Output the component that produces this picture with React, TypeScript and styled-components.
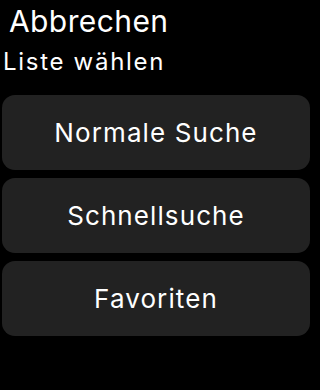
import styled, { createGlobalStyle } from 'styled-components';

const GlobalStyle = createGlobalStyle`
  html, body {
    margin: 0;
    padding: 0;
    background: #000;
  }
  body {
    font-family: Inter, "Noto Sans", sans-serif;
    color: #fff;
  }
`;

const Screen = styled.div`
  width: 312px;
  height: 390px;
  background: #000;
  display: flex;
  flex-direction: column;
  overflow: hidden;
`;

const Header = styled.header`
  display: flex;
  flex-direction: column;
  padding: 3px 0 0 0;
`;

const CancelLink = styled.div`
  font-size: 30px;
  line-height: 36px;
  letter-spacing: 0.4px;
  padding-left: 9px;
`;

const Title = styled.h1`
  margin: 8px 0 0;
  font-size: 24px;
  font-weight: 400;
  line-height: 30px;
  letter-spacing: 1.7px;
  padding-left: 3px;
`;

const List = styled.div`
  display: flex;
  flex-direction: column;
  gap: 8px;
  padding: 18px 2px 0;
`;

const Choice = styled.button`
  height: 75px;
  border: none;
  border-radius: 13px;
  background: #222222;
  color: #fff;
  font-family: Inter, "Noto Sans", sans-serif;
  font-size: 26px;
  letter-spacing: 1.1px;
  display: flex;
  align-items: center;
  justify-content: center;
  padding: 0;
`;

const options = ['Normale Suche', 'Schnellsuche', 'Favoriten'];

const App = () => (
  <>
    <GlobalStyle />
    <Screen>
      <Header>
        <CancelLink>Abbrechen</CancelLink>
        <Title>Liste wählen</Title>
      </Header>
      <List>
        {options.map((label) => (
          <Choice key={label}>{label}</Choice>
        ))}
      </List>
    </Screen>
  </>
);

export default App;
